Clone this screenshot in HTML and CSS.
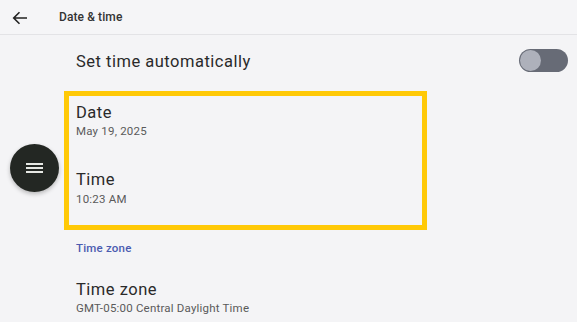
FILE: index.html
```html
<!DOCTYPE html>
<html>
<head>
<meta charset="utf-8">
<link rel="stylesheet" href="styles.css">
</head>
<body>
<div class="screen">
  <header class="topbar">
    <svg class="back" width="16" height="14" viewBox="0 0 16 14"><path d="M15 7H2M7.5 1.2L1.7 7l5.8 5.8" fill="none" stroke="#222" stroke-width="1.6"/></svg>
    <span class="topbar-title">Date &amp; time</span>
  </header>
  <main class="list">
    <div class="row row-switch">
      <span class="title">Set time automatically</span>
      <span class="toggle"><span class="thumb"></span></span>
    </div>
    <div class="row row-date">
      <div class="title">Date</div>
      <div class="sub">May 19, 2025</div>
    </div>
    <div class="row row-time">
      <div class="title">Time</div>
      <div class="sub">10:23 AM</div>
    </div>
    <div class="section">Time zone</div>
    <div class="row row-tz">
      <div class="title">Time zone</div>
      <div class="sub">GMT-05:00 Central Daylight Time</div>
    </div>
  </main>
  <div class="highlight"></div>
  <div class="fab"><span></span><span></span><span></span></div>
</div>
</body>
</html>
```

FILE: styles.css
```css
html, body {
  margin: 0;
  padding: 0;
  background: #f4f4f6;
}
.screen {
  position: relative;
  width: 577px;
  height: 322px;
  overflow: hidden;
  font-family: Roboto, "Noto Sans", sans-serif;
  color: #262626;
}
.topbar {
  height: 35px;
  box-sizing: border-box;
  border-bottom: 1px solid #e3e3e6;
  background: #f5f5f7;
  display: flex;
  align-items: center;
}
.back {
  margin-left: 12px;
  margin-top: 1px;
}
.topbar-title {
  margin-left: 31px;
  font-size: 12px;
  font-weight: 500;
  color: #333;
  letter-spacing: 0.1px;
}
.list {
  padding-left: 76px;
}
.title {
  font-size: 16.5px;
  line-height: 20px;
  letter-spacing: 0.5px;
  color: #2a2a2a;
}
.sub {
  font-size: 11.5px;
  line-height: 14px;
  letter-spacing: 0.2px;
  color: #5a5a5a;
}
.row-switch {
  height: 50px;
  display: flex;
  align-items: center;
  justify-content: space-between;
  padding-right: 9px;
}
.row-switch .title {
  margin-top: 4px;
}
.toggle {
  width: 49px;
  height: 23px;
  border-radius: 12px;
  background: #676b76;
  display: flex;
  align-items: center;
  padding-left: 1px;
  box-sizing: border-box;
}
.thumb {
  width: 21px;
  height: 21px;
  border-radius: 50%;
  background: #aeb1bb;
}
.row-date {
  padding-top: 18px;
}
.row-date .sub {
  margin-top: 1px;
}
.row-time {
  padding-top: 32px;
}
.row-time .sub {
  margin-top: 2px;
}
.section {
  margin-top: 35px;
  font-size: 11.5px;
  line-height: 14px;
  font-weight: 500;
  letter-spacing: 0.2px;
  color: #4a5bb0;
}
.row-tz {
  padding-top: 25px;
}
.row-tz .sub {
  margin-top: 1px;
}
.highlight {
  position: absolute;
  left: 64px;
  top: 91px;
  width: 363px;
  height: 139px;
  box-sizing: border-box;
  border: 5px solid #ffc907;
}
.fab {
  position: absolute;
  left: 10px;
  top: 144px;
  width: 49px;
  height: 48px;
  border-radius: 50%;
  background: #232723;
  box-shadow: 0 2px 4px rgba(0,0,0,0.25);
  display: flex;
  flex-direction: column;
  align-items: center;
  justify-content: center;
  gap: 2px;
}
.fab span {
  width: 17px;
  height: 2px;
  background: #e6e8e4;
}
```
